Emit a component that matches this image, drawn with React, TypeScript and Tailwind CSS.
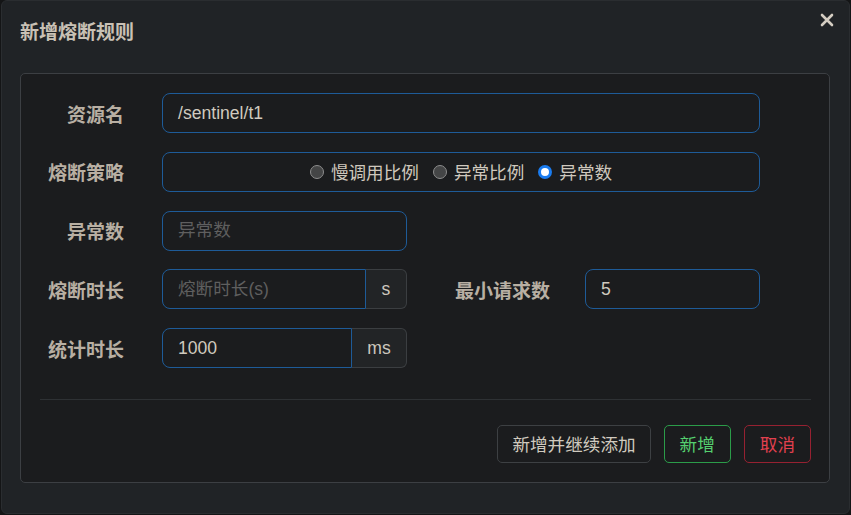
import React from "react";

const cjk = { fontFamily: '"Liberation Sans", "Noto Sans CJK SC", sans-serif' };

function Label({ children, w = "w-[84px]" }: { children: React.ReactNode; w?: string }) {
  return (
    <div className={`${w} shrink-0 pt-[4px] text-right text-[19px] font-bold text-[#b8afa3] leading-none`}>{children}</div>
  );
}

function Radio({ checked, label }: { checked?: boolean; label: string }) {
  return (
    <div className="flex items-center gap-[7px]">
      {checked ? (
        <span className="w-[14px] h-[14px] rounded-full border-[3.5px] border-[#1a7cf0] bg-white box-border" />
      ) : (
        <span className="w-[14px] h-[14px] rounded-full border border-[#8d8d8d] bg-[#444546] box-border" />
      )}
      <span className="pt-[3px] text-[17.6px] text-[#cfc8bd] leading-none">{label}</span>
    </div>
  );
}

export default function App() {
  return (
    <div className="w-[851px] h-[515px] bg-[#141516] overflow-hidden" style={cjk}>
      <div className="ml-[1px] w-[849px] h-[514px] bg-[#202326] rounded-[6px] border border-[#2a2d30] flex flex-col">
        <div className="h-[72px] flex items-start justify-between pl-[18px] pr-[15px]">
          <div className="mt-[22px] text-[19px] font-bold text-[#c9c1b5] leading-none">新增熔断规则</div>
          <svg className="mt-[12px]" width="14" height="14" viewBox="0 0 14 14">
            <path d="M2 2 L12 12 M12 2 L2 12" stroke="#d4cdc2" strokeWidth="2.6" strokeLinecap="round" />
          </svg>
        </div>
        <div className="ml-[18px] mr-[19px] bg-[#1b1c1e] border border-[#3c3f43] rounded-[5px] pt-[19px] pb-[19px] pl-[19px] pr-[18px]">
          <div className="flex flex-col gap-[18.8px]">
            <div className="flex items-center h-[40px]">
              <Label>资源名</Label>
              <div className="ml-[38px] w-[598px] h-[40px] rounded-[8px] border border-[#1e5b98] flex items-center pl-[15px] text-[17.6px] text-[#d0cabf]">
                /sentinel/t1
              </div>
            </div>
            <div className="flex items-center h-[40px]">
              <Label>熔断策略</Label>
              <div className="ml-[38px] w-[598px] h-[40px] rounded-[8px] border border-[#1e5b98] flex items-center justify-center gap-[14px]">
                <Radio label="慢调用比例" />
                <Radio label="异常比例" />
                <Radio checked label="异常数" />
              </div>
            </div>
            <div className="flex items-center h-[40px]">
              <Label>异常数</Label>
              <div className="ml-[38px] w-[245px] h-[40px] rounded-[8px] border border-[#1e5b98] flex items-center pl-[15px] text-[17.6px] text-[#5f5f5f]">
                异常数
              </div>
            </div>
            <div className="flex items-center h-[40px]">
              <Label>熔断时长</Label>
              <div className="ml-[38px] w-[245px] h-[40px] flex">
                <div className="flex-1 rounded-l-[8px] border border-[#1e5b98] flex items-center pl-[15px] text-[17.6px] text-[#5f5f5f]">
                  熔断时长(s)
                </div>
                <div className="w-[41px] rounded-r-[6px] border border-l-0 border-[#3b3e41] bg-[#222426] flex items-center justify-center text-[17.6px] text-[#cdc7bd]">
                  s
                </div>
              </div>
              <Label w="w-[143px]">最小请求数</Label>
              <div className="ml-[35px] w-[175px] h-[40px] rounded-[8px] border border-[#1e5b98] flex items-center pl-[15px] text-[17.6px] text-[#d0cabf]">
                5
              </div>
            </div>
            <div className="flex items-center h-[40px]">
              <Label>统计时长</Label>
              <div className="ml-[38px] w-[245px] h-[40px] flex">
                <div className="flex-1 rounded-l-[8px] border border-[#1e5b98] flex items-center pl-[15px] text-[17.6px] text-[#d0cabf]">
                  1000
                </div>
                <div className="w-[55px] rounded-r-[6px] border border-l-0 border-[#3b3e41] bg-[#222426] flex items-center justify-center text-[17.6px] text-[#cdc7bd]">
                  ms
                </div>
              </div>
            </div>
          </div>
          <div className="mt-[31px] h-px bg-[#2e3134]" />
          <div className="mt-[25px] flex justify-end gap-[13px]">
            <button className="h-[38px] px-[14px] pt-[3px] rounded-[5px] border border-[#3d4043] text-[17.6px] text-[#d0cabf] leading-none">
              新增并继续添加
            </button>
            <button className="h-[38px] px-[15px] pt-[3px] rounded-[5px] border border-[#2b9c49] text-[17.6px] text-[#55d06f] leading-none">
              新增
            </button>
            <button className="h-[38px] px-[15px] pt-[3px] rounded-[5px] border border-[#962131] text-[17.6px] text-[#e2404f] leading-none">
              取消
            </button>
          </div>
        </div>
      </div>
    </div>
  );
}
